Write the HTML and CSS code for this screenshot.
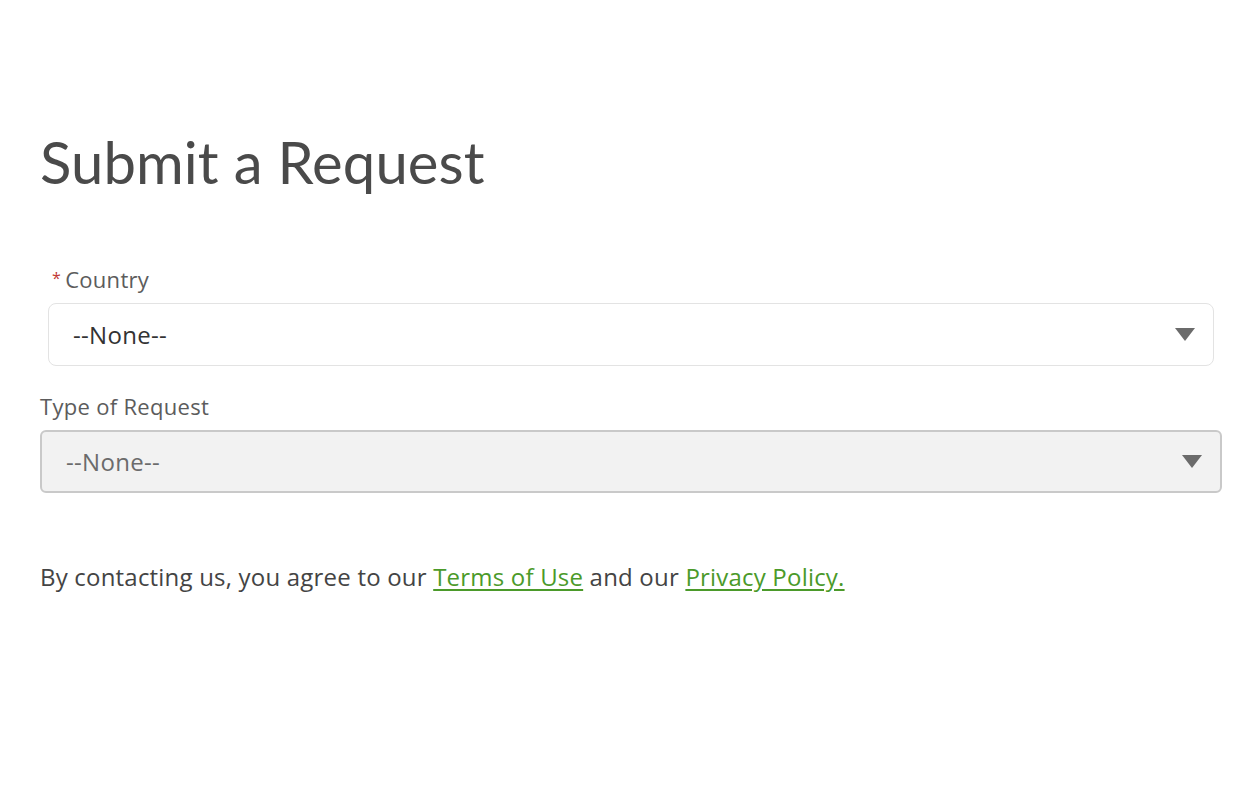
FILE: index.html
```html
<!DOCTYPE html>
<html>
<head>
<meta charset="utf-8">
<link rel="stylesheet" href="styles.css">
</head>
<body>
<main class="page">
  <h1 class="title">Submit a Request</h1>
  <form class="form">
    <div class="field field-inset">
      <label class="label"><span class="req">*</span>Country</label>
      <div class="select select-white">
        <span class="value">--None--</span>
        <span class="caret"></span>
      </div>
    </div>
    <div class="field">
      <label class="label">Type of Request</label>
      <div class="select select-disabled">
        <span class="value">--None--</span>
        <span class="caret"></span>
      </div>
    </div>
  </form>
  <p class="consent">By contacting us, you agree to our <a href="#">Terms of Use</a> and our <a href="#">Privacy Policy.</a></p>
</main>
</body>
</html>
```

FILE: styles.css
```css
html, body {
  margin: 0;
  padding: 0;
  background: #fff;
}
body {
  font-family: "Open Sans", Lato, "Liberation Sans", sans-serif;
  color: #4a4a4a;
}
.page {
  padding: 124px 32px 0 40px;
}
.title {
  margin: 0;
  font-family: Lato, "Open Sans", sans-serif;
  font-size: 58px;
  font-weight: 400;
  line-height: 76px;
  color: #4a4a4a;
  letter-spacing: 0.1px;
}
.form {
  margin-top: 66px;
  display: flex;
  flex-direction: column;
  gap: 28px;
}
.field {
  display: flex;
  flex-direction: column;
  gap: 12px;
}
.field-inset {
  margin: 0 8px;
}
.label {
  font-size: 22px;
  line-height: 24px;
  letter-spacing: 0.3px;
  color: #5c5c5c;
}
.field-inset .label {
  margin-left: 4px;
}
.req {
  color: #c23934;
  font-size: 16px;
  margin-right: 4px;
  vertical-align: 4px;
}
.select {
  height: 63px;
  box-sizing: border-box;
  display: flex;
  align-items: center;
  justify-content: space-between;
  padding: 0 18px 0 24px;
  font-size: 24px;
  letter-spacing: 0.3px;
}
.select-white {
  background: #fff;
  border: 1px solid #e3e3e3;
  border-radius: 8px;
  color: #333;
}
.select-disabled {
  background: #f2f2f2;
  border: 2px solid #c9c9c9;
  border-radius: 6px;
  color: #6b6b6b;
}
.caret {
  width: 0;
  height: 0;
  border-left: 10px solid transparent;
  border-right: 10px solid transparent;
  border-top: 13px solid #6b6b6b;
}
.consent {
  margin: 69px 0 0;
  font-size: 24px;
  line-height: 30px;
  letter-spacing: 0.2px;
  color: #444;
}
.consent a {
  color: #4b9a2a;
  text-decoration: underline;
  text-underline-offset: 3px;
}
```
